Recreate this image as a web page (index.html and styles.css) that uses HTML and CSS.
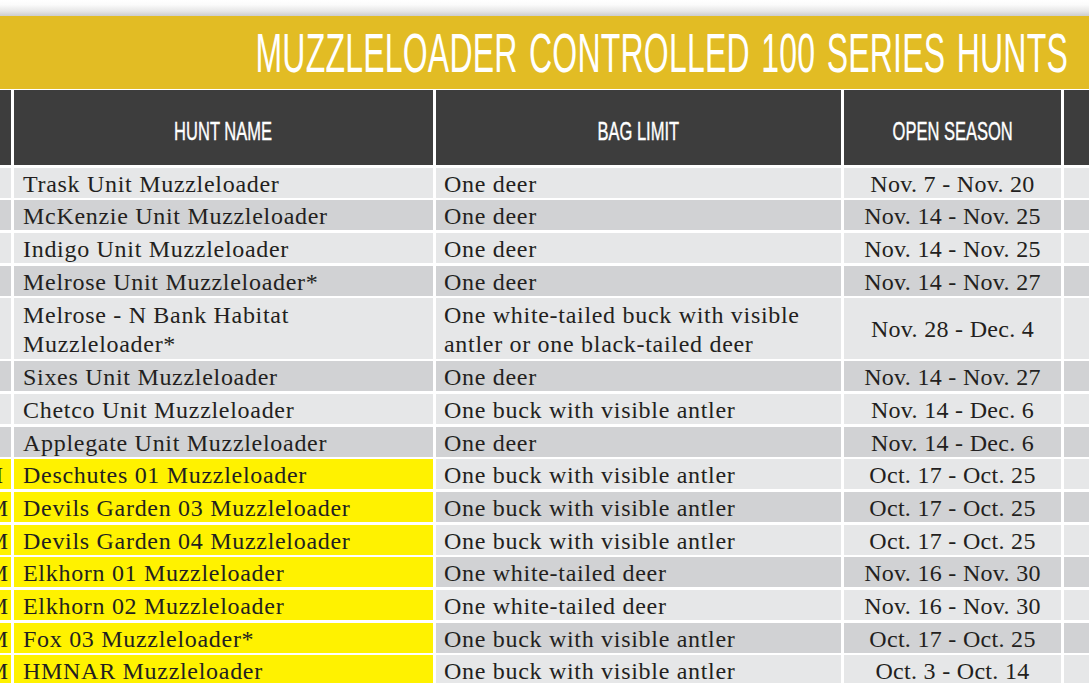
FILE: index.html
```html
<!DOCTYPE html>
<html lang="en">
<head>
<meta charset="utf-8">
<title>Muzzleloader Controlled 100 Series Hunts</title>
<link rel="stylesheet" href="styles.css">
</head>
<body>
<div class="shadow"></div>
<header class="banner">
  <h1 class="title">MUZZLELOADER CONTROLLED 100 SERIES HUNTS</h1>
</header>
<div class="table">
  <div class="th"></div>
  <div class="th"><span class="hlabel">HUNT NAME</span></div>
  <div class="th"><span class="hlabel">BAG LIMIT</span></div>
  <div class="th"><span class="hlabel">OPEN SEASON</span></div>
  <div class="th"></div>

  <div class="td code light"></div>
  <div class="td name light">Trask Unit Muzzleloader</div>
  <div class="td bag light">One deer</div>
  <div class="td season light">Nov. 7 - Nov. 20</div>
  <div class="td light"></div>

  <div class="td code dark"></div>
  <div class="td name dark">McKenzie Unit Muzzleloader</div>
  <div class="td bag dark">One deer</div>
  <div class="td season dark">Nov. 14 - Nov. 25</div>
  <div class="td dark"></div>

  <div class="td code light"></div>
  <div class="td name light">Indigo Unit Muzzleloader</div>
  <div class="td bag light">One deer</div>
  <div class="td season light">Nov. 14 - Nov. 25</div>
  <div class="td light"></div>

  <div class="td code dark"></div>
  <div class="td name dark">Melrose Unit Muzzleloader*</div>
  <div class="td bag dark">One deer</div>
  <div class="td season dark">Nov. 14 - Nov. 27</div>
  <div class="td dark"></div>

  <div class="td code light"></div>
  <div class="td name light">Melrose - N Bank Habitat<br>Muzzleloader*</div>
  <div class="td bag light">One white-tailed buck with visible<br>antler or one black-tailed deer</div>
  <div class="td season light">Nov. 28 - Dec. 4</div>
  <div class="td light"></div>

  <div class="td code dark"></div>
  <div class="td name dark">Sixes Unit Muzzleloader</div>
  <div class="td bag dark">One deer</div>
  <div class="td season dark">Nov. 14 - Nov. 27</div>
  <div class="td dark"></div>

  <div class="td code light"></div>
  <div class="td name light">Chetco Unit Muzzleloader</div>
  <div class="td bag light">One buck with visible antler</div>
  <div class="td season light">Nov. 14 - Dec. 6</div>
  <div class="td light"></div>

  <div class="td code dark"></div>
  <div class="td name dark">Applegate Unit Muzzleloader</div>
  <div class="td bag dark">One deer</div>
  <div class="td season dark">Nov. 14 - Dec. 6</div>
  <div class="td dark"></div>

  <div class="td code hl shift">M</div>
  <div class="td name hl">Deschutes 01 Muzzleloader</div>
  <div class="td bag light">One buck with visible antler</div>
  <div class="td season light">Oct. 17 - Oct. 25</div>
  <div class="td light"></div>

  <div class="td code hl">M</div>
  <div class="td name hl">Devils Garden 03 Muzzleloader</div>
  <div class="td bag dark">One buck with visible antler</div>
  <div class="td season dark">Oct. 17 - Oct. 25</div>
  <div class="td dark"></div>

  <div class="td code hl">M</div>
  <div class="td name hl">Devils Garden 04 Muzzleloader</div>
  <div class="td bag light">One buck with visible antler</div>
  <div class="td season light">Oct. 17 - Oct. 25</div>
  <div class="td light"></div>

  <div class="td code hl">M</div>
  <div class="td name hl">Elkhorn 01 Muzzleloader</div>
  <div class="td bag dark">One white-tailed deer</div>
  <div class="td season dark">Nov. 16 - Nov. 30</div>
  <div class="td dark"></div>

  <div class="td code hl">M</div>
  <div class="td name hl">Elkhorn 02 Muzzleloader</div>
  <div class="td bag light">One white-tailed deer</div>
  <div class="td season light">Nov. 16 - Nov. 30</div>
  <div class="td light"></div>

  <div class="td code hl">M</div>
  <div class="td name hl">Fox 03 Muzzleloader*</div>
  <div class="td bag dark">One buck with visible antler</div>
  <div class="td season dark">Oct. 17 - Oct. 25</div>
  <div class="td dark"></div>

  <div class="td code hl">M</div>
  <div class="td name hl">HMNAR Muzzleloader</div>
  <div class="td bag light">One buck with visible antler</div>
  <div class="td season light">Oct. 3 - Oct. 14</div>
  <div class="td light"></div>
</div>
</body>
</html>
```
FILE: styles.css
```css
html, body {
  margin: 0;
  padding: 0;
  background: #ffffff;
  overflow: hidden;
  width: 1089px;
  height: 683px;
}

body {
  font-family: "Liberation Serif", "Times New Roman", serif;
  color: #231f20;
}

.shadow {
  height: 16px;
  background: linear-gradient(#ffffff 0%, #fbfbfb 30%, #e6e6e6 70%, #cdcdcd 100%);
}

.banner {
  height: 72.5px;
  background: #e2bc24;
  display: flex;
  justify-content: flex-end;
  align-items: center;
  padding-right: 21px;
  margin-bottom: 1.5px;
}

.title {
  margin: 0;
  flex-shrink: 0;
  white-space: nowrap;
  font-family: "Liberation Sans", Arial, sans-serif;
  font-weight: normal;
  font-size: 56px;
  line-height: 1;
  letter-spacing: 0.4px;
  word-spacing: 4px;
  color: #ffffff;
  transform: scaleX(0.571);
  transform-origin: right center;
  padding-top: 2px;
}

.table {
  display: grid;
  grid-template-columns: 60px 419px 405px 217px 100px;
  grid-template-rows: 75px repeat(4, 30.2px) 60.4px repeat(10, 30.2px);
  column-gap: 3px;
  row-gap: 2.5px;
  margin-left: -49px;
  width: 1213px;
}

.th {
  background: #3d3d3d;
  display: flex;
  align-items: center;
  justify-content: center;
  padding-top: 8px;
}

.hlabel {
  display: inline-block;
  white-space: nowrap;
  font-family: "Liberation Sans", Arial, sans-serif;
  font-size: 26px;
  color: #ffffff;
  -webkit-text-stroke: 0.4px #ffffff;
  transform: scaleX(0.635);
  transform-origin: center;
}

.td {
  display: flex;
  align-items: center;
  font-size: 24px;
  line-height: 29px;
  white-space: nowrap;
  overflow: hidden;
  padding-top: 3px;
}

.light { background: #e6e7e8; }
.dark { background: #d1d2d4; }
.hl { background: #fff200; }

.name {
  padding-left: 9px;
  letter-spacing: 0.7px;
}

.bag {
  padding-left: 8px;
  letter-spacing: 0.7px;
}

.season {
  justify-content: center;
  letter-spacing: 0.3px;
}

.code {
  justify-content: flex-end;
  padding-right: 3px;
}

.code.shift {
  padding-right: 8px;
}
```
